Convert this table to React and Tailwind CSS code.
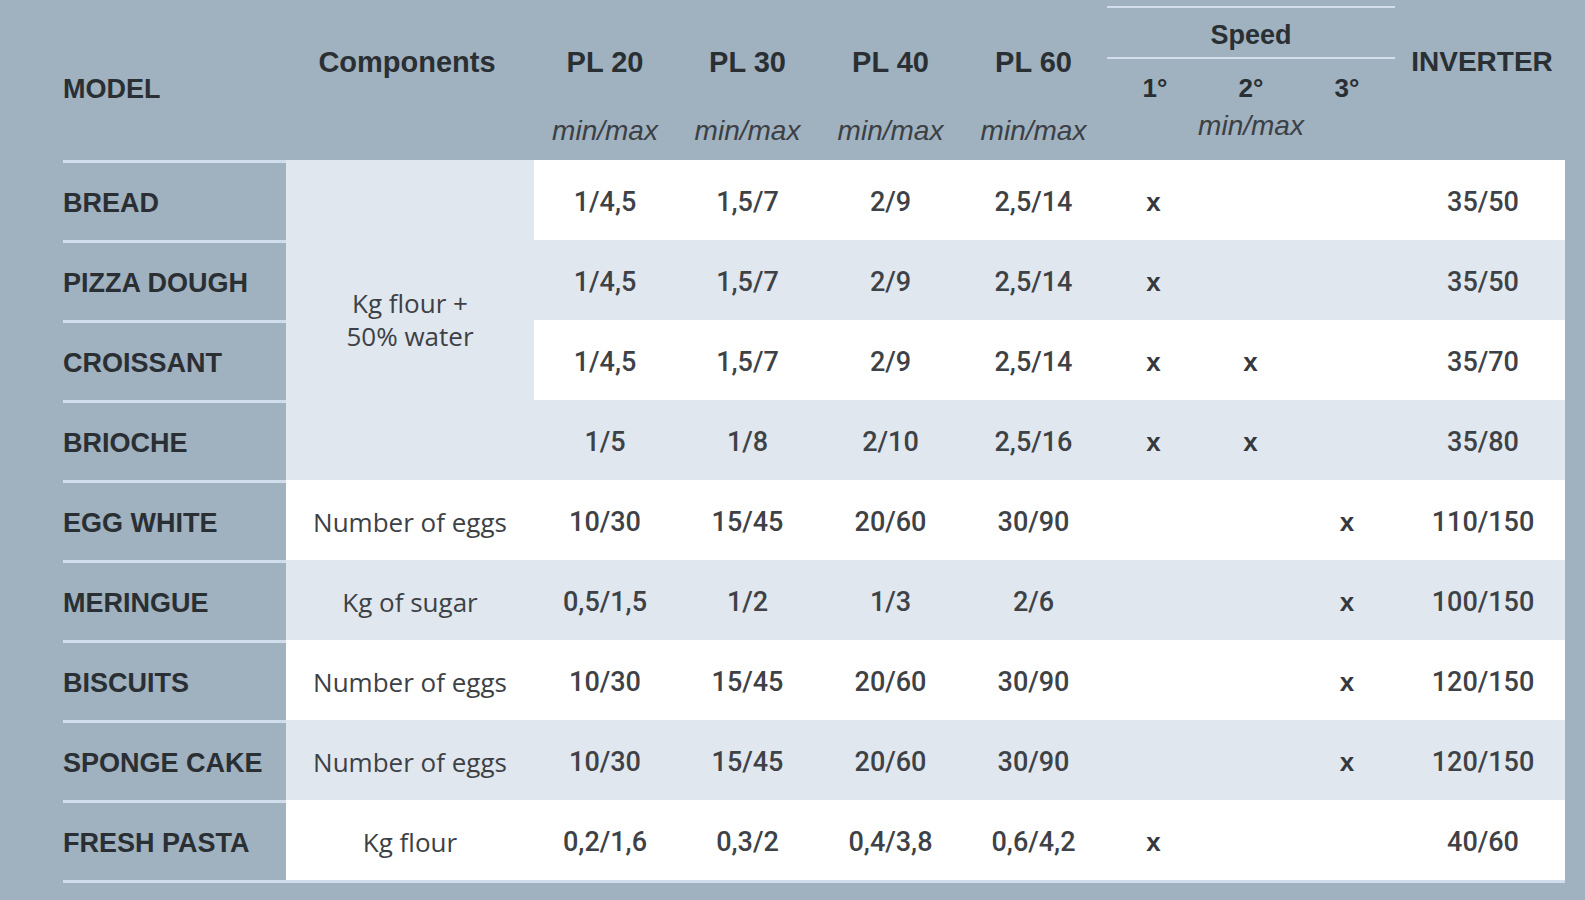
const rows = [
  { name: "BREAD", comp: null, pl: ["1/4,5", "1,5/7", "2/9", "2,5/14"], sp: ["x", "", ""], inv: "35/50" },
  { name: "PIZZA DOUGH", comp: null, pl: ["1/4,5", "1,5/7", "2/9", "2,5/14"], sp: ["x", "", ""], inv: "35/50" },
  { name: "CROISSANT", comp: null, pl: ["1/4,5", "1,5/7", "2/9", "2,5/14"], sp: ["x", "x", ""], inv: "35/70" },
  { name: "BRIOCHE", comp: null, pl: ["1/5", "1/8", "2/10", "2,5/16"], sp: ["x", "x", ""], inv: "35/80" },
  { name: "EGG WHITE", comp: "Number of eggs", pl: ["10/30", "15/45", "20/60", "30/90"], sp: ["", "", "x"], inv: "110/150" },
  { name: "MERINGUE", comp: "Kg of sugar", pl: ["0,5/1,5", "1/2", "1/3", "2/6"], sp: ["", "", "x"], inv: "100/150" },
  { name: "BISCUITS", comp: "Number of eggs", pl: ["10/30", "15/45", "20/60", "30/90"], sp: ["", "", "x"], inv: "120/150" },
  { name: "SPONGE CAKE", comp: "Number of eggs", pl: ["10/30", "15/45", "20/60", "30/90"], sp: ["", "", "x"], inv: "120/150" },
  { name: "FRESH PASTA", comp: "Kg flour", pl: ["0,2/1,6", "0,3/2", "0,4/3,8", "0,6/4,2"], sp: ["x", "", ""], inv: "40/60" },
]

const cols = "grid grid-cols-[223px_248px_142px_143px_143px_143px_97px_97px_96px_170px]"
const sans = "font-['Liberation_Sans',Arial,sans-serif]"
const label = `${sans} font-bold text-[#2a2f34]`
const minmax = `${sans} italic text-[28px] leading-[32px] text-[#3b4045]`

function Cell({ children, bg }) {
  return (
    <div className={`${bg} flex items-center justify-center pt-[5px] font-['Roboto',sans-serif] font-medium text-[27px] text-[#3e4246]`}>
      {children}
    </div>
  )
}

function Header() {
  return (
    <div className={`${cols} h-[160px]`}>
      <div className={`${label} text-[27px] leading-[32px] pt-[73px]`}>MODEL</div>
      <div className={`${label} text-[29px] leading-[32px] pt-[46px] text-center pr-[6px]`}>Components</div>
      {["PL 20", "PL 30", "PL 40", "PL 60"].map((t) => (
        <div key={t} className="flex flex-col items-center pt-[46px]">
          <div className={`${label} text-[29px] leading-[32px]`}>{t}</div>
          <div className={`${minmax} mt-[37px]`}>min/max</div>
        </div>
      ))}
      <div className="col-span-3 flex flex-col pt-[6px] pl-[2px]">
        <div className="h-[2px] bg-[#d2dfea]" />
        <div className={`${label} text-[27px] leading-[32px] text-center pt-[11px]`}>Speed</div>
        <div className="h-[2px] bg-[#d2dfea] mt-[6px]" />
        <div className={`grid grid-cols-3 pt-[13px] ${label} text-[26px] leading-[32px] text-center`}>
          <div>1°</div>
          <div>2°</div>
          <div>3°</div>
        </div>
        <div className={`${minmax} text-center mt-[6px]`}>min/max</div>
      </div>
      <div className={`${label} text-[28px] leading-[32px] pt-[46px] text-center pl-[4px]`}>INVERTER</div>
    </div>
  )
}

export default function App() {
  return (
    <div className="w-[1585px] h-[900px] bg-[#a0b1bf] pl-[63px] overflow-hidden">
      <Header />
      <div className={`${cols} grid-rows-[repeat(9,80px)]`}>
        {rows.map((r, i) => {
          const bg = i % 2 === 0 ? "bg-white" : "bg-[#e0e7ee]"
          return [
            <div
              key={r.name}
              className={`border-t-[3px] border-[#d0dfeb] flex items-center pt-[3px] ${label} text-[27px]`}
            >
              {r.name}
            </div>,
            i === 0 ? (
              <div
                key="comp0"
                className={`row-span-4 bg-[#e0e7ee] flex items-center justify-center text-center font-['Open_Sans',sans-serif] text-[26px] leading-[33px] text-[#3d4145]`}
              >
                Kg flour +
                <br />
                50% water
              </div>
            ) : r.comp ? (
              <div
                key={"comp" + i}
                className={`${bg} flex items-center justify-center pt-[5px] font-['Open_Sans',sans-serif] text-[26px] text-[#3d4145]`}
              >
                {r.comp}
              </div>
            ) : null,
            ...r.pl.map((v, j) => (
              <Cell key={"pl" + i + j} bg={bg}>
                {v}
              </Cell>
            )),
            ...r.sp.map((v, j) => (
              <Cell key={"sp" + i + j} bg={bg}>
                <span className={`${sans} font-bold text-[26px] text-[#35393d]`}>{v}</span>
              </Cell>
            )),
            <Cell key={"inv" + i} bg={bg}>
              <span className="pl-[6px]">{r.inv}</span>
            </Cell>,
          ]
        })}
      </div>
      <div className="w-[1502px] h-[3px] bg-[#cfdeea]" />
    </div>
  )
}
